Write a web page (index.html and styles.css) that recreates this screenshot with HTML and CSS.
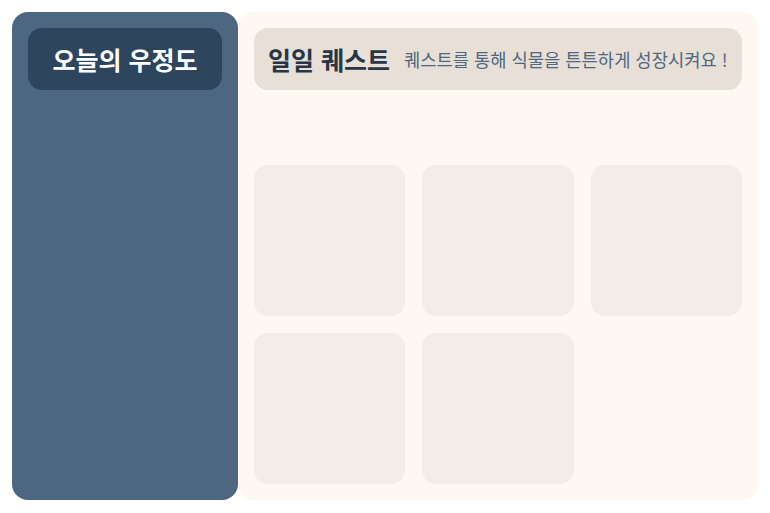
FILE: index.html
```html
<!DOCTYPE html>
<html lang="ko">
<head>
    <meta charset="UTF-8">
    <meta name="viewport" content="width=device-width, initial-scale=1.0">
    <title>일일 퀘스트</title>
    <link rel="stylesheet" href="styles.css">
</head>
<body>
<div class="layout">
    <aside class="sidebar">
        <div class="friendship">오늘의 우정도</div>
    </aside>
    <main class="main">
        <div class="quest-header">
            <h1 class="quest-title">일일 퀘스트</h1>
            <p class="quest-desc">퀘스트를 통해 식물을 튼튼하게 성장시켜요 !</p>
        </div>
        <div class="quest-grid">
            <div class="quest-card"></div>
            <div class="quest-card"></div>
            <div class="quest-card"></div>
            <div class="quest-card"></div>
            <div class="quest-card"></div>
        </div>
    </main>
</div>
</body>
</html>
```

FILE: styles.css
```css
body {
    margin: 0;
    padding: 12px;
    background-color: #ffffff;
    font-family: "Noto Sans CJK KR", "Noto Sans", sans-serif;
}

.layout {
    display: flex;
    height: 488px;
    width: 746px;
}

.sidebar {
    width: 226px;
    flex-shrink: 0;
    box-sizing: border-box;
    padding: 16px;
    background-color: #4d6781;
    border-radius: 16px;
}

.friendship {
    height: 62px;
    display: flex;
    justify-content: center;
    align-items: center;
    background-color: #2d455d;
    border-radius: 14px;
    color: #ffffff;
    font-size: 25px;
    font-weight: 700;
}

.main {
    flex: 1;
    box-sizing: border-box;
    padding: 16px;
    background-color: #fdf8f2;
    border-radius: 16px;
    display: flex;
    flex-direction: column;
}

.quest-header {
    height: 62px;
    flex-shrink: 0;
    display: flex;
    align-items: center;
    gap: 14px;
    padding: 0 8px 0 14px;
    background-color: #e8dfd6;
    border-radius: 14px;
    white-space: nowrap;
}

.quest-title {
    margin: 0;
    flex-shrink: 0;
    font-size: 25px;
    font-weight: 700;
    color: #263646;
}

.quest-desc {
    margin: 0;
    flex-shrink: 0;
    font-size: 17.7px;
    color: #4e6782;
}

.quest-grid {
    margin-top: auto;
    display: grid;
    grid-template-columns: repeat(3, 1fr);
    grid-auto-rows: 151px;
    gap: 17px;
}

.quest-card {
    background-color: #f4ede7;
    border-radius: 14px;
}
```
